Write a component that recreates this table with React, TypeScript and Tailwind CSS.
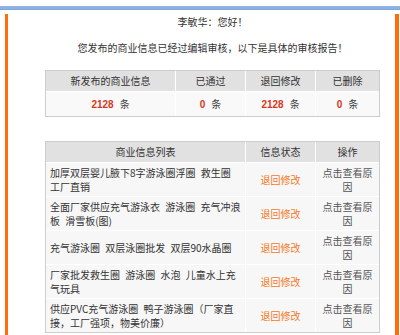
import React from "react";

const cjk = { fontFamily: '"Noto Sans CJK SC", "Liberation Sans", sans-serif' };

function Count({ n }: { n: string }) {
  return (
    <span className="inline-flex items-baseline">
      <span className="font-bold text-[#d9361c]" style={{ fontFamily: '"Liberation Sans", Arial, sans-serif' }}>{n}</span>
      <span className="ml-[6px] text-[#444]">条</span>
    </span>
  );
}

const rows: { lines: string[] }[] = [
  { lines: ["加厚双层婴儿腋下8字游泳圈浮圈 救生圈", "工厂直销"] },
  { lines: ["全面厂家供应充气游泳衣 游泳圈 充气冲浪", "板 滑雪板(图)"] },
  { lines: ["充气游泳圈 双层泳圈批发 双层90水晶圈"] },
  { lines: ["厂家批发救生圈 游泳圈 水泡 儿童水上充", "气玩具"] },
  { lines: ["供应PVC充气游泳圈 鸭子游泳圈（厂家直", "接，工厂强项，物美价廉）"] },
];

export default function App() {
  return (
    <div className="w-[400px] h-[335px] overflow-hidden bg-white text-[10px] leading-[14px] text-[#333]" style={cjk}>
      <div className="h-[6px]" />
      <div className="h-[4px] bg-[#8db2e2] border-b border-[#7fa6d8]" />
      <div className="h-[4px]" />
      <div className="flex h-[330px]">
        <div className="ml-[5px] w-[3px] bg-[#ff6d0a]" />
        <div className="w-[387px]">
          <div className="ml-[37px] w-[335px]">
            <div className="mt-[1px] text-center">李敏华：您好！</div>
            <div className="mt-[12px] text-center">您发布的商业信息已经过编辑审核，以下是具体的审核报告！</div>

            <div className="mt-[15px] border border-[#cdcdcd] bg-white grid grid-cols-[129px_69px_69px_63px] gap-px">
              <div className="h-[20px] bg-[#e1e1e1] flex items-center justify-center">新发布的商业信息</div>
              <div className="h-[20px] bg-[#e1e1e1] flex items-center justify-center">已通过</div>
              <div className="h-[20px] bg-[#e1e1e1] flex items-center justify-center">退回修改</div>
              <div className="h-[20px] bg-[#e1e1e1] flex items-center justify-center">已删除</div>
              <div className="h-[24px] bg-[#f9f9f9] flex items-center justify-center"><Count n="2128" /></div>
              <div className="h-[24px] bg-[#f9f9f9] flex items-center justify-center"><Count n="0" /></div>
              <div className="h-[24px] bg-[#f9f9f9] flex items-center justify-center"><Count n="2128" /></div>
              <div className="h-[24px] bg-[#f9f9f9] flex items-center justify-center"><Count n="0" /></div>
            </div>

            <div className="mt-[24px] border border-[#cdcdcd] bg-white grid grid-cols-[199px_69px_63px] gap-px">
              <div className="h-[20px] bg-[#e1e1e1] flex items-center justify-center">商业信息列表</div>
              <div className="h-[20px] bg-[#e1e1e1] flex items-center justify-center">信息状态</div>
              <div className="h-[20px] bg-[#e1e1e1] flex items-center justify-center">操作</div>
              {rows.map((r, i) => (
                <React.Fragment key={i}>
                  <div className="h-[33px] bg-[#f7f7f7] flex items-center pl-[4px] whitespace-nowrap [word-spacing:3px]">
                    <div>
                      {r.lines.map((l, j) => (
                        <div key={j}>{l}</div>
                      ))}
                    </div>
                  </div>
                  <div className="h-[33px] bg-[#f7f7f7] flex items-center justify-center text-[#f57a26]">退回修改</div>
                  <div className="h-[33px] bg-[#f7f7f7] flex items-center justify-center text-center text-[#555]">
                    <div>
                      <div>点击查看原</div>
                      <div>因</div>
                    </div>
                  </div>
                </React.Fragment>
              ))}
            </div>
          </div>
        </div>
        <div className="w-[4px] bg-[#ff6d0a]" />
      </div>
    </div>
  );
}
